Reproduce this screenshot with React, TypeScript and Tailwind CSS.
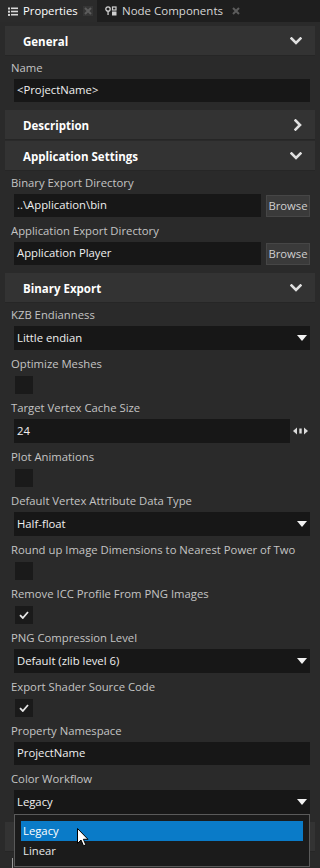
import React from "react";

const Chevron = ({ dir = "down" }: { dir?: "down" | "right" }) =>
  dir === "down" ? (
    <svg width="12" height="8" viewBox="0 0 12 8">
      <path d="M1.5 1.5 L6 6 L10.5 1.5" stroke="#e0e0e0" strokeWidth="2.6" fill="none" strokeLinecap="square" />
    </svg>
  ) : (
    <svg width="8" height="12" viewBox="0 0 8 12">
      <path d="M1.5 1.5 L6 6 L1.5 10.5" stroke="#e0e0e0" strokeWidth="2.6" fill="none" strokeLinecap="square" />
    </svg>
  );

const Header = ({ title, open = true, className = "" }: { title: string; open?: boolean; className?: string }) => (
  <div className={"h-[30px] bg-[#333333] border-b border-[#262626] flex items-center justify-between pl-[18px] pr-[13px] " + className}>
    <span className="text-[11.5px] font-bold text-white leading-none pt-[2px]">{title}</span>
    <Chevron dir={open ? "down" : "right"} />
  </div>
);

const Label = ({ children }: { children: React.ReactNode }) => (
  <div className="h-[16px] leading-[16px] text-[11.3px] text-[#c4c4c4] whitespace-nowrap">{children}</div>
);

const TextInput = ({ value, className = "" }: { value: string; className?: string }) => (
  <div className={"bg-[#171717] flex items-center pl-[3px] text-[11.3px] text-[#f0f0f0] " + className}>{value}</div>
);

const Field = ({ label, children }: { label: string; children: React.ReactNode }) => (
  <div className="flex flex-col">
    <Label>{label}</Label>
    <div className="mt-[3px] ml-[3px]">{children}</div>
  </div>
);

const Dropdown = ({ value }: { value: string }) => (
  <div className="h-[24px] bg-[#171717] flex items-center justify-between pl-[3px] pr-[3px] text-[11.3px] text-[#f0f0f0]">
    <span>{value}</span>
    <svg width="10" height="6" viewBox="0 0 10 6">
      <path d="M0 0 H10 L5 6 Z" fill="#f2f2f2" />
    </svg>
  </div>
);

const Checkbox = ({ label, checked = false }: { label: string; checked?: boolean }) => (
  <div className="flex flex-col">
    <Label>{label}</Label>
    <div className="mt-[4px] ml-[4px] w-[18px] h-[18px] bg-[#1a1a1a] flex items-center justify-center">
      {checked && (
        <svg width="10" height="8" viewBox="0 0 10 8">
          <path d="M1 4.2 L3.8 7 L9 1" stroke="#e6e6e6" strokeWidth="1.8" fill="none" />
        </svg>
      )}
    </div>
  </div>
);

const Content = ({ children }: { children: React.ReactNode }) => (
  <div className="flex flex-col gap-[6px] pt-[4px] pb-[8px] pl-[6px] pr-[5px]">{children}</div>
);

const Browse = () => (
  <div className="w-[44px] h-[22px] bg-[#3a3a3a] border border-[#464646] flex items-center justify-center text-[11.3px] text-[#cfcfcf] mt-[1px]">
    Browse
  </div>
);

const CloseX = ({ boxed = false }: { boxed?: boolean }) => (
  <div className={"w-[10px] h-[10px] flex items-center justify-center " + (boxed ? "bg-[#353535]" : "")}>
    <svg width="8" height="8" viewBox="0 0 8 8">
      <path d="M1 1 L7 7 M7 1 L1 7" stroke="#5c5c5c" strokeWidth="2" />
    </svg>
  </div>
);

export default function App() {
  return (
    <div className="w-[320px] h-[868px] overflow-hidden bg-[#2a2a2a] font-['Open_Sans',sans-serif] select-none">
      {/* Tab bar */}
      <div className="h-[22px] bg-[#1e1e1e] flex">
        <div className="w-[97px] bg-[#2b2b2b] flex items-center pl-[8px] pr-[4px]">
          <svg width="10" height="9" viewBox="0 0 10 9">
            <rect x="0" y="0.5" width="2" height="2" fill="#d8d8d8" />
            <rect x="3" y="0.5" width="7" height="1.6" fill="#d8d8d8" />
            <rect x="0" y="3.7" width="2" height="2" fill="#d8d8d8" />
            <rect x="3" y="3.7" width="7" height="1.6" fill="#d8d8d8" />
            <rect x="0" y="6.9" width="2" height="2" fill="#d8d8d8" />
            <rect x="3" y="6.9" width="7" height="1.6" fill="#d8d8d8" />
          </svg>
          <span className="ml-[5px] text-[11.3px] text-white leading-none">Properties</span>
          <div className="ml-auto">
            <CloseX boxed />
          </div>
        </div>
        <div className="flex items-center pl-[8px]">
          <svg width="12" height="10" viewBox="0 0 12 10">
            <circle cx="3" cy="3" r="2.2" stroke="#d0d0d0" strokeWidth="1.3" fill="none" />
            <rect x="2.4" y="5" width="1.3" height="4" fill="#d0d0d0" />
            <rect x="7.5" y="1" width="3.5" height="3" stroke="#d0d0d0" strokeWidth="1.2" fill="none" />
            <rect x="7" y="5.5" width="4.5" height="4" fill="#d0d0d0" />
          </svg>
          <span className="ml-[5px] text-[11.5px] text-[#d6d6d6] leading-none">Node Components</span>
          <div className="ml-[8px]">
            <CloseX />
          </div>
        </div>
      </div>

      {/* Panel */}
      <div className="pt-[4px] px-[5px]">
        <Header title="General" />
        <Content>
          <Field label="Name">
            <TextInput value="<ProjectName>" className="h-[23px]" />
          </Field>
        </Content>

        <Header title="Description" open={false} className="mb-[1px]" />
        <Header title="Application Settings" />
        <Content>
          <Field label="Binary Export Directory">
            <div className="flex gap-[5px]">
              <TextInput value="..\Application\bin" className="flex-1 h-[23px]" />
              <Browse />
            </div>
          </Field>
          <Field label="Application Export Directory">
            <div className="flex gap-[5px]">
              <TextInput value="Application Player" className="flex-1 h-[23px]" />
              <Browse />
            </div>
          </Field>
        </Content>

        <Header title="Binary Export" />
        <Content>
          <Field label="KZB Endianness">
            <Dropdown value="Little endian" />
          </Field>
          <Checkbox label="Optimize Meshes" />
          <Field label="Target Vertex Cache Size">
            <div className="flex items-center">
              <TextInput value="24" className="flex-1 h-[24px]" />
              <div className="w-[20px] flex justify-center">
                <svg width="15" height="8" viewBox="0 0 15 8">
                  <path d="M0 4 L4 0.5 V7.5 Z" fill="#dcdcdc" />
                  <path d="M15 4 L11 0.5 V7.5 Z" fill="#dcdcdc" />
                  <rect x="6.3" y="1.5" width="2.4" height="5" fill="#dcdcdc" />
                </svg>
              </div>
            </div>
          </Field>
          <Checkbox label="Plot Animations" />
          <Field label="Default Vertex Attribute Data Type">
            <Dropdown value="Half-float" />
          </Field>
          <Checkbox label="Round up Image Dimensions to Nearest Power of Two" />
          <Checkbox label="Remove ICC Profile From PNG Images" checked />
          <Field label="PNG Compression Level">
            <Dropdown value="Default (zlib level 6)" />
          </Field>
          <Checkbox label="Export Shader Source Code" checked />
          <Field label="Property Namespace">
            <TextInput value="ProjectName" className="h-[23px]" />
          </Field>
          <Field label="Color Workflow">
            <div className="relative">
              <Dropdown value="Legacy" />
              <div className="absolute z-10 left-0 right-0 top-full h-[53px] bg-[#1b1b1b] border border-[#5a5a5a] pt-[6px] px-[6px]">
                <div className="h-[20px] bg-[#0a7bc8] flex items-center pl-[2px] text-[11.3px] text-white">Legacy</div>
                <div className="h-[20px] flex items-center pl-[2px] text-[11.3px] text-[#e8e8e8]">Linear</div>
                <svg className="absolute left-[62px] top-[13px]" width="12" height="19" viewBox="0 0 12 19">
                  <path d="M0.5 0.5 V15.5 L4 12 L6.5 17.8 L8.8 16.8 L6.4 11.3 H11 Z" fill="#ffffff" stroke="#000000" strokeWidth="1" strokeLinejoin="round" />
                </svg>
              </div>
            </div>
          </Field>
        </Content>

        <div className="h-[30px] bg-[#333333] border-b border-[#262626]" />
        <div className="pt-[6px] pl-[7px]">
          <div className="w-[3px] h-[12px] border-l border-b border-[#9a9a9a]" />
        </div>
      </div>
    </div>
  );
}
